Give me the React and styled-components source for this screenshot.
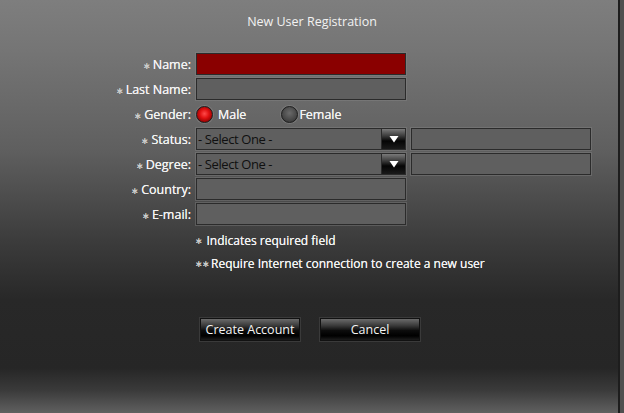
import React from "react";
import styled, { createGlobalStyle } from "styled-components";

const Global = createGlobalStyle`
  html, body { margin: 0; padding: 0; background: #1a1a1a; }
  body { font-family: "Open Sans", "Noto Sans", sans-serif; }
`;

const Window = styled.div`
  position: relative;
  width: 624px;
  height: 413px;
  box-sizing: border-box;
  background: linear-gradient(
    to bottom,
    #7e7e7e 0px,
    #757575 50px,
    #5f5f5f 150px,
    #3c3c3c 240px,
    #282828 300px,
    #262626 368px,
    #3a3a3a 390px,
    #606060 413px
  );
  box-shadow: inset -4px 0 0 rgba(120, 120, 120, 0.55), inset -6px 0 0 #1d1d1d;
  display: flex;
  flex-direction: column;
  align-items: stretch;
  color: #f0f0f0;
`;

const Title = styled.h1`
  margin: 12px 0 0;
  height: 19px;
  font-size: 12.5px;
  font-weight: 400;
  text-align: center;
  color: #f2f2f2;
  line-height: 19px;
`;

const Form = styled.div`
  margin-top: 22px;
  display: grid;
  grid-template-columns: 191px auto;
  column-gap: 5px;
  row-gap: 3px;
  grid-auto-rows: 22px;
`;

const Label = styled.label`
  display: flex;
  align-items: center;
  justify-content: flex-end;
  font-size: 12.5px;
  color: #f2f2f2;
  white-space: nowrap;
  text-shadow: 0 0 0.3px #fff;
`;

const Star = styled.span`
  font-size: 9px;
  color: #c8c8c8;
  margin-right: 2px;
  position: relative;
  top: 1px;
`;

const Input = styled.div`
  box-sizing: border-box;
  width: ${(p) => p.$w || 210}px;
  height: 22px;
  background: ${(p) => (p.$error ? "#8a0000" : "#5f5f5f")};
  border: 1px solid #2b2b2b;
  box-shadow: 0 0 0 1px rgba(140, 140, 140, 0.35);
`;

const FieldRow = styled.div`
  display: flex;
  align-items: center;
  gap: 5px;
`;

const SelectBox = styled.div`
  display: flex;
  box-sizing: border-box;
  width: 210px;
  height: 22px;
  border: 1px solid #2b2b2b;
  box-shadow: 0 0 0 1px rgba(140, 140, 140, 0.35);
  background: #5f5f5f;
`;

const SelectText = styled.div`
  flex: 1;
  display: flex;
  align-items: center;
  padding-left: 1px;
  font-size: 13px;
  color: #101010;
  letter-spacing: -0.4px;
  border-right: 1px solid #2b2b2b;
`;

const Arrow = styled.div`
  width: 23px;
  display: flex;
  align-items: center;
  justify-content: center;
  background: linear-gradient(to bottom, #7a7a7a 0%, #3a3a3a 35%, #050505 60%, #1a1a1a 100%);
`;

const RadioGroup = styled.div`
  display: flex;
  align-items: center;
  font-size: 12.5px;
  color: #f2f2f2;
  text-shadow: 0 0 0.3px #fff;
`;

const RadioItem = styled.span`
  display: flex;
  align-items: center;
  gap: ${(p) => (p.$tight ? 1 : 5)}px;
  margin-left: ${(p) => p.$ml || 0}px;
`;

const RadioDot = styled.span`
  box-sizing: border-box;
  width: 17px;
  height: 17px;
  border-radius: 50%;
  border: 1px solid #1e1e1e;
  background: ${(p) =>
    p.$on
      ? "radial-gradient(circle at 50% 45%, #ff4a4a 0%, #e01010 40%, #8a0000 80%, #500000 100%)"
      : "radial-gradient(circle at 50% 40%, #6a6a6a 0%, #4a4a4a 55%, #2e2e2e 100%)"};
  box-shadow: 0 0 0 1px rgba(150, 150, 150, 0.4);
`;

const Notes = styled.div`
  margin: 7px 0 0 195px;
  display: flex;
  flex-direction: column;
  gap: 6px;
  font-size: 12px;
  color: #f2f2f2;
  text-shadow: 0 0 0.3px #fff;
`;

const Note = styled.div`
  height: 17px;
  line-height: 17px;
  display: flex;
  align-items: center;
`;

const NoteStar = styled.span`
  font-size: 9px;
  color: #c8c8c8;
  letter-spacing: -1.5px;
  margin-right: ${(p) => p.$mr || 5}px;
`;

const Buttons = styled.div`
  margin: 46px 0 0 200px;
  display: flex;
  gap: 20px;
`;

const Button = styled.button`
  box-sizing: border-box;
  width: 100px;
  height: 23px;
  padding: 0;
  font-family: "Open Sans", "Noto Sans", sans-serif;
  font-size: 12.5px;
  color: #f4f4f4;
  border: 1px solid #111;
  box-shadow: 0 0 0 1px #3a3a3a;
  background: linear-gradient(to bottom, #6a6a6a 0%, #3c3c3c 30%, #0c0c0c 55%, #000 80%, #1c1c1c 100%);
  cursor: pointer;
`;

const Req = () => <Star>∗</Star>;

const DownArrow = () => (
  <svg width="10" height="8" viewBox="0 0 10 8">
    <polygon points="0.5,1 9.5,1 5,7.5" fill="#ffffff" />
  </svg>
);

export default function App() {
  return (
    <>
      <Global />
      <Window>
        <Title>New User Registration</Title>
        <Form>
          <Label><Req />Name:</Label>
          <Input $error />

          <Label><Req />Last Name:</Label>
          <Input />

          <Label><Req />Gender:</Label>
          <RadioGroup>
            <RadioItem>
              <RadioDot $on />
              Male
            </RadioItem>
            <RadioItem $ml={35} $tight>
              <RadioDot />
              Female
            </RadioItem>
          </RadioGroup>

          <Label><Req />Status:</Label>
          <FieldRow>
            <SelectBox>
              <SelectText>- Select One -</SelectText>
              <Arrow><DownArrow /></Arrow>
            </SelectBox>
            <Input $w={180} />
          </FieldRow>

          <Label><Req />Degree:</Label>
          <FieldRow>
            <SelectBox>
              <SelectText>- Select One -</SelectText>
              <Arrow><DownArrow /></Arrow>
            </SelectBox>
            <Input $w={180} />
          </FieldRow>

          <Label><Req />Country:</Label>
          <Input />

          <Label><Req />E-mail:</Label>
          <Input />
        </Form>
        <Notes>
          <Note><NoteStar>∗</NoteStar>Indicates required field</Note>
          <Note><NoteStar $mr={3}>∗∗</NoteStar>Require Internet connection to create a new user</Note>
        </Notes>
        <Buttons>
          <Button>Create Account</Button>
          <Button>Cancel</Button>
        </Buttons>
      </Window>
    </>
  );
}
